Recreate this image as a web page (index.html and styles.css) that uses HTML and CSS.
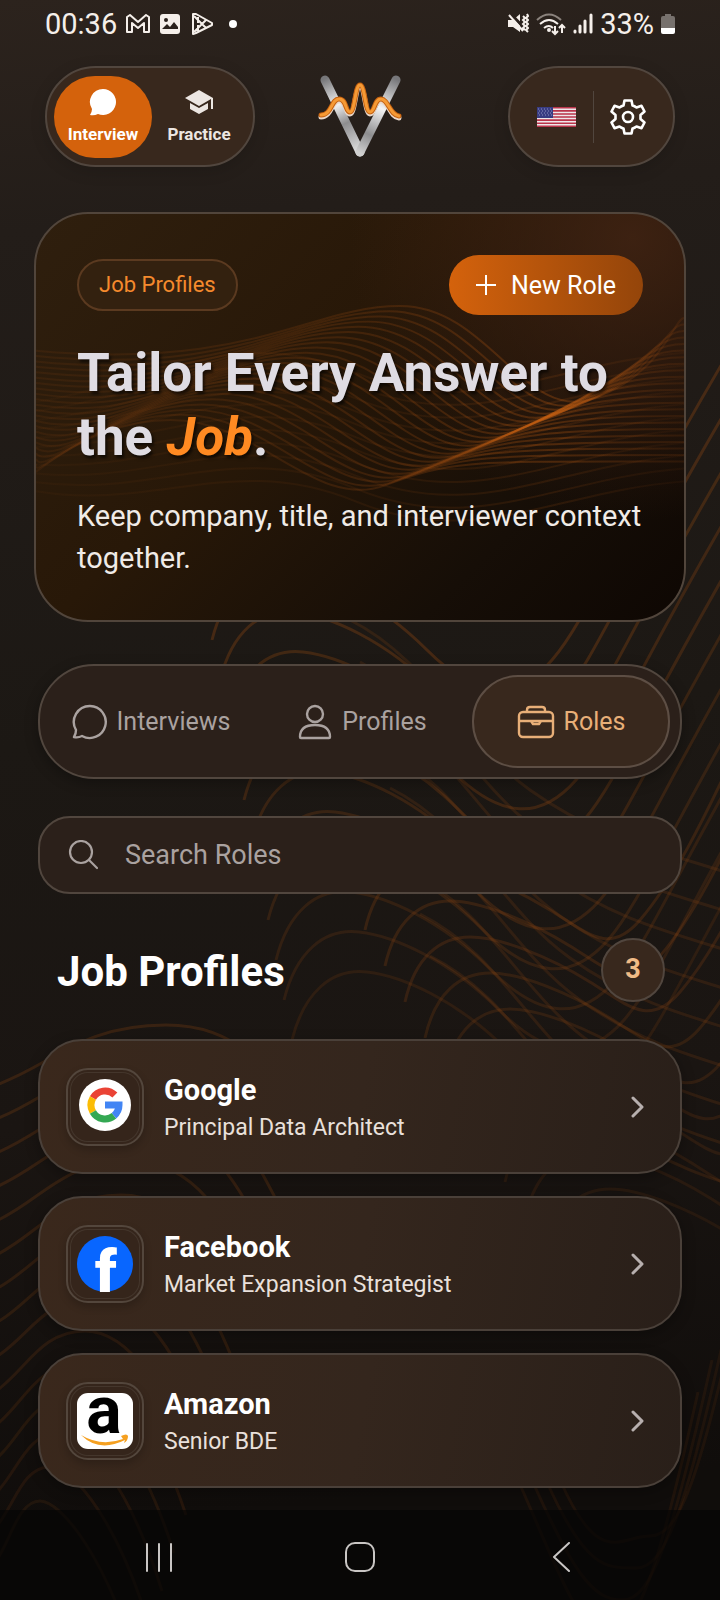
FILE: index.html
```
<!DOCTYPE html>
<html lang="en">
    <head>
        <title>Job Profiles</title>
        <meta charset="UTF-8">
        <meta name="viewport" content="width=device-width, initial-scale=1">
        <link rel="stylesheet" href="styles.css">
    </head>
    <body>
        <svg class="backdrop" viewBox="0 0 720 1600" preserveAspectRatio="none" aria-hidden="true">
            <g id="backwaves"></g>
        </svg>

        <div class="page">
            <div class="status">
                <div class="status-side">
                    <span class="time">00:36</span>
                    <svg width="24" height="20" viewBox="0 0 24 20" fill="none" stroke="#f5efea" stroke-width="2" stroke-linejoin="round"><path d="M1 18V3l3-2 8 7 8-7 3 2v15h-5V9l-6 5-6-5v9z"/></svg>
                    <svg width="22" height="22" viewBox="0 0 22 22"><rect x="1" y="1" width="20" height="20" rx="3" fill="#f5efea"/><path d="M3 16l5-5 3 3 4-5 4 5v2z" fill="#2a211c"/><circle cx="7" cy="7" r="2" fill="#2a211c"/></svg>
                    <svg width="24" height="24" viewBox="0 0 24 24" fill="none" stroke="#f5efea" stroke-width="2" stroke-linejoin="round"><path d="M3 2v20l3-1 16-8v-2L6 2zM4 4l12 12M4 20L16 8M8 5v6M8 19v-6"/></svg>
                    <span class="dot"></span>
                </div>
                <div class="status-side right">
                    <svg width="22" height="22" viewBox="0 0 22 22"><path d="M1 7h5l7-6v18l-7-5H1z" fill="#f5efea"/><path d="M3 0l17 18" stroke="#2a211c" stroke-width="3"/><path d="M2 2l14 16M16 3l2 2-2 2 2 2-2 2 2 2-2 2 2 2M20 1l1 2-2 2 2 2-2 2 2 2-2 2 2 2-2 2 2 2" fill="none" stroke="#f5efea" stroke-width="2"/></svg>
                    <svg width="30" height="24" viewBox="0 0 30 24" fill="none" stroke="#f5efea" stroke-width="2"><path d="M1 8q12-11 24 0" stroke="#8b837d"/><path d="M4 12q9-8 18 0M8 16q5-4 9 0"/><circle cx="13" cy="18" r="1" fill="#f5efea"/><path d="M19 14v8M16 19l3 3 3-3M26 21v-7M23 16l3-3 3 3"/></svg>
                    <svg width="20" height="22" viewBox="0 0 20 22" stroke="#f5efea" stroke-width="3" stroke-linecap="round"><path d="M2 18v1M7 13v6M12 8v11M18 2v17"/></svg>
                    <span class="time">33%</span>
                    <svg class="battery" width="14" height="20" viewBox="0 0 14 20"><path d="M4 0h6v2h2q2 0 2 2v10H0V4q0-2 2-2h2z" fill="#77716d"/><path d="M0 14h14v4q0 2-2 2H2q-2 0-2-2z" fill="#fff"/></svg>
                </div>
            </div>

            <header class="header">
                <div class="pill modes">
                    <button class="mode active">
                        <svg width="28" height="28" viewBox="0 0 28 28"><path d="M14 1a13 13 0 1 1-5 25q-4 2-8 1 2-3 2-6A13 13 0 0 1 14 1z" fill="#fff"/></svg>
                        Interview
                    </button>
                    <button class="mode">
                        <svg width="28" height="28" viewBox="0 0 28 28"><path d="M14 2L0 10l14 8 12-7v10h2V10zM5 15v6l9 5 9-5v-6l-9 5z" fill="#ece6e2"/></svg>
                        Practice
                    </button>
                </div>
                <svg width="84" height="84" viewBox="0 0 84 84" fill="none" stroke-linecap="round" stroke-linejoin="round">
                    <defs>
                        <linearGradient id="steelLeft" gradientUnits="userSpaceOnUse" x1="6" y1="4" x2="42" y2="78"><stop offset="0" stop-color="#77777a"/><stop offset=".35" stop-color="#f2f2f2"/><stop offset=".6" stop-color="#8d8d8f"/><stop offset="1" stop-color="#e4e4e4"/></linearGradient>
                        <linearGradient id="steelRight" gradientUnits="userSpaceOnUse" x1="78" y1="4" x2="42" y2="78"><stop offset="0" stop-color="#77777a"/><stop offset=".4" stop-color="#f4f4f4"/><stop offset=".75" stop-color="#8d8d8f"/><stop offset="1" stop-color="#d0d0d0"/></linearGradient>
                    </defs>
                    <path d="M7 5l35 72" stroke="url(#steelLeft)" stroke-width="9"/>
                    <path d="M78 5L42 77" stroke="url(#steelRight)" stroke-width="9"/>
                    <path d="M3 42c11 0 10-16 18-16s6 13 11 13 5-27 10-27 5 27 10 27 4-13 11-13 9 16 18 17" stroke="#e9d8ca" stroke-width="5"/>
                    <path d="M3 40c11 0 10-16 18-16s6 13 11 13 5-27 10-27 5 27 10 27 4-13 11-13 9 16 18 17" stroke="#c4600f" stroke-width="5"/>
                    <path d="M3 40c11 0 10-16 18-16s6 13 11 13 5-27 10-27 5 27 10 27 4-13 11-13 9 16 18 17" stroke="#f59a35" stroke-width="3"/>
                </svg>
                <div class="pill settings">
                    <button aria-label="Language">
                        <svg width="39" height="20" viewBox="0 0 39 20"><path fill="#eee7ea" d="M0 0h39v20H0z"/><path stroke="#b9344a" stroke-width="1.6" d="M0 .8h39M0 3.9h39M0 7h39M0 10h39M0 13.1h39M0 16.2h39M0 19.2h39"/><path fill="#383c82" d="M0 0h16v11H0z"/><path stroke="#8b8fc0" stroke-dasharray="1 2" d="M1 2h14M2 4h13M1 6h14M2 8h13"/></svg>
                    </button>
                    <span class="divider"></span>
                    <button aria-label="Settings">
                        <svg width="36" height="36" viewBox="0 0 36 36" fill="none" stroke="#fff" stroke-width="2.6" stroke-linejoin="round"><path d="M14.500 1.500h7l1 5q2 .5 4 2l5-1.700 3 5.700-4 3.500v4l4 3.500-3 5.700-5-1.700q-2 1.500-4 2l-1 5h-7l-1-5q-2-.5-4-2l-5 1.700-3-5.700 4-3.500v-4l-4-3.500 3-5.700 5 1.700q2-1.500 4-2z"/><circle cx="18" cy="18" r="5"/></svg>
                    </button>
                </div>
            </header>

            <section class="hero">
                <svg class="hero-waves" viewBox="0 0 650 410" preserveAspectRatio="none" aria-hidden="true">
                    <defs>
                        <linearGradient id="glow" gradientUnits="userSpaceOnUse" x1="0" y1="0" x2="650" y2="0"><stop offset="0" stop-color="#8f4410" stop-opacity=".18"/><stop offset=".55" stop-color="#a04c10" stop-opacity=".32"/><stop offset=".8" stop-color="#d06412" stop-opacity=".36"/><stop offset="1" stop-color="#8f4410" stop-opacity=".22"/></linearGradient>
                    </defs>
                    <g id="herowaves"></g>
                </svg>
                <div class="hero-top">
                    <span class="badge">Job Profiles</span>
                    <button class="new-role">
                        <svg width="20" height="20" viewBox="0 0 20 20" stroke="#fff" stroke-width="2"><path d="M10 0v20M0 10h20"/></svg>
                        New Role
                    </button>
                </div>
                <h1>Tailor Every Answer to the <em>Job</em>.</h1>
                <p>Keep company, title, and interviewer context together.</p>
            </section>

            <nav class="tabs">
                <button class="tab">
                    <svg width="36" height="36" viewBox="0 0 36 36" fill="none" stroke="currentColor" stroke-width="2.400" stroke-linejoin="round"><path d="M18 2a16 16 0 1 1-8 30q-4 2-8 1 2-3 2-7A16 16 0 0 1 18 2z"/></svg>
                    Interviews
                </button>
                <button class="tab">
                    <svg width="36" height="36" viewBox="0 0 36 36" fill="none" stroke="currentColor" stroke-width="2.400" stroke-linejoin="round"><circle cx="18" cy="10" r="8"/><path d="M3 33q0-12 15-12t15 12q0 1-1 1H4q-1 0-1-1z"/></svg>
                    Profiles
                </button>
                <button class="tab active">
                    <svg width="38" height="36" viewBox="0 0 38 36" fill="none" stroke="currentColor" stroke-width="2.400" stroke-linejoin="round"><rect x="2" y="8" width="34" height="25" rx="4"/><path d="M10 8V6q0-3 3-3h12q3 0 3 3v2M2 17h34M14 17l2 3h6l2-3"/></svg>
                    Roles
                </button>
            </nav>

            <div class="search">
                <label for="search" aria-label="Search Roles">
                    <svg width="30" height="30" viewBox="0 0 30 30" fill="none" stroke="#aaa2a0" stroke-width="2.200" stroke-linecap="round"><circle cx="13" cy="12" r="11"/><path d="M21 20l8 8"/></svg>
                </label>
                <input id="search" type="text" placeholder="Search Roles">
            </div>

            <div class="section-head">
                <h2>Job Profiles</h2>
                <span class="count">3</span>
            </div>

            <div class="cards">
                <a class="card" href="#google">
                    <span class="tile">
                        <svg width="56" height="56" viewBox="0 0 56 56" fill="none" stroke-width="7">
                            <circle cx="28" cy="26" r="26" fill="#fff"/>
                            <path d="M37.900 16.100A14 14 0 0 0 15.900 19" stroke="#ea4335"/>
                            <path d="M15.900 19a14 14 0 0 0 0 14" stroke="#fbbc05"/>
                            <path d="M15.900 33A14 14 0 0 0 37 36.700" stroke="#34a853"/>
                            <path d="M37 36.700A14 14 0 0 0 42 26H28" stroke="#4285f4"/>
                        </svg>
                    </span>
                    <span class="info"><strong>Google</strong><span>Principal Data Architect</span></span>
                    <svg class="chevron" width="14" height="22" viewBox="0 0 14 22"><path d="M2 2l9 9-9 9"/></svg>
                </a>
                <a class="card" href="#facebook">
                    <span class="tile">
                        <svg width="56" height="56" viewBox="0 0 56 56"><circle cx="28" cy="28" r="28" fill="#0866ff"/><text class="letter heavy" x="29" y="56" font-size="60" fill="#fff">f</text></svg>
                    </span>
                    <span class="info"><strong>Facebook</strong><span>Market Expansion Strategist</span></span>
                    <svg class="chevron" width="14" height="22" viewBox="0 0 14 22"><path d="M2 2l9 9-9 9"/></svg>
                </a>
                <a class="card" href="#amazon">
                    <span class="tile">
                        <svg width="56" height="56" viewBox="0 0 56 56"><rect width="56" height="56" rx="11" fill="#fff"/><text class="letter" x="27" y="40" font-size="66" fill="#000">a</text><path d="M4 42q20 12 42 4l-2-3q6-3 7 0 0 5-4 7l1-3Q22 60 4 42z" fill="#f5a020"/></svg>
                    </span>
                    <span class="info"><strong>Amazon</strong><span>Senior BDE</span></span>
                    <svg class="chevron" width="14" height="22" viewBox="0 0 14 22"><path d="M2 2l9 9-9 9"/></svg>
                </a>
            </div>

            <nav class="system-nav">
                <button aria-label="Recent apps"><svg width="30" height="30" viewBox="0 0 30 30"><path d="M3 2v27M15 2v27M27 2v27"/></svg></button>
                <button aria-label="Home"><svg width="30" height="30" viewBox="0 0 30 30"><rect x="1" y="1" width="28" height="28" rx="9"/></svg></button>
                <button aria-label="Back"><svg width="30" height="30" viewBox="0 0 30 30"><path d="M23 1L8 15l15 14"/></svg></button>
            </nav>
        </div>
        <script src="waves.js"></script>
    </body>
</html>
```
FILE: styles.css
```
*{
    box-sizing: border-box;
}
body{
    margin: 0;
    min-height: 100vh;
    background: linear-gradient(175deg, #2c231d 0%, #231d19 14%, #1c1814 45%, #1a1512 68%, #100d0b 92%);
    color: #fff;
    font-family: Roboto, "Liberation Sans", sans-serif;
}
button{
    border: 0;
    padding: 0;
    background: none;
    color: inherit;
    font: inherit;
}
svg{
    display: block;
    flex: none;
}
.backdrop{
    position: absolute;
    top: 0;
    left: 0;
    width: 100%;
    height: 100%;
    z-index: -1;
    fill: none;
    stroke: #8a4513;
    stroke-width: 3;
}
.page{
    display: flex;
    flex-direction: column;
    min-height: 100vh;
}

/* status bar */
.status{
    display: flex;
    justify-content: space-between;
    align-items: center;
    height: 48px;
    padding: 0 45px;
    color: #f5efea;
}
.status-side{
    display: flex;
    align-items: center;
    gap: 9px;
}
.status-side.right{
    gap: 7px;
}
.time{
    font-size: 29px;
    line-height: 32px;
}
.dot{
    width: 8px;
    height: 8px;
    margin-left: 6px;
    border-radius: 50%;
    background: #fff;
}

/* header */
.header{
    display: grid;
    grid-template-columns: 1fr auto 1fr;
    align-items: center;
    padding: 18px 45px 0;
}
.pill{
    display: flex;
    align-items: center;
    height: 101px;
    border: 2px solid #51463e;
    border-radius: 51px;
    background: #38281d;
    box-shadow: 0 4px 16px rgba(0, 0, 0, 0.15);
}
.modes{
    width: 210px;
    padding: 0 7px;
}
.mode{
    display: flex;
    flex: 1;
    flex-direction: column;
    align-items: center;
    justify-content: center;
    gap: 7px;
    height: 82px;
    border-radius: 41px;
    color: #ece6e2;
    font-size: 17px;
    font-weight: 700;
    line-height: 22px;
}
.mode.active{
    flex: 0 0 98px;
    background: #d4620c;
    color: #fff;
}
.settings{
    justify-self: end;
    justify-content: space-between;
    width: 167px;
    padding: 0 27px;
}
.divider{
    width: 1px;
    height: 52px;
    background: #51463e;
}

/* hero */
.hero{
    position: relative;
    overflow: hidden;
    margin: 45px 34px 0;
    padding: 41px 41px;
    border: 2px solid #51453b;
    border-radius: 54px;
    background: radial-gradient(circle at 92% 6%, rgba(68, 37, 20, 0.8), rgba(60, 30, 15, 0) 40%), linear-gradient(135deg, #2f1f0e 0%, #281808 40%, #160e07 75%, #0e0703 100%);
}
.hero-waves{
    position: absolute;
    top: 0;
    left: 0;
    width: 100%;
    height: 100%;
    fill: none;
    stroke: url(#glow);
    stroke-width: 2;
}
.hero-top{
    position: relative;
    display: flex;
    justify-content: space-between;
    align-items: center;
}
.badge{
    padding: 12px 20px;
    border: 2px solid #5b3a20;
    border-radius: 26px;
    background: #33210f;
    color: #f58a2d;
    font-size: 22px;
    line-height: 24px;
}
.new-role{
    display: flex;
    align-items: center;
    gap: 15px;
    height: 60px;
    padding: 0 27px;
    border-radius: 30px;
    background: linear-gradient(90deg, #d4620c, #94450a);
    font-size: 25px;
}
h1{
    position: relative;
    margin: 26px 0 0;
    color: #dfdce3;
    font-size: 53px;
    font-weight: 700;
    line-height: 64px;
    text-shadow: 2px 3px 3px rgba(0, 0, 0, 0.6);
}
h1 em{
    color: #ff8a22;
}
.hero p{
    position: relative;
    margin: 26px 0 0;
    color: #f0ebe7;
    font-size: 29px;
    line-height: 42px;
}

/* tabs */
.tabs{
    display: flex;
    margin: 42px 38px 0;
    height: 115px;
    padding: 9px 10px;
    border: 2px solid #51463e;
    border-radius: 56px;
    background: #2b201a;
    box-shadow: 0 4px 14px rgba(0, 0, 0, 0.3);
}
.tab{
    display: flex;
    flex: 1;
    align-items: center;
    justify-content: center;
    gap: 9px;
    padding-right: 9px;
    border: 2px solid transparent;
    border-radius: 46px;
    color: #aaa2a0;
    font-size: 25px;
}
.tab.active{
    flex: 0 0 198px;
    padding: 0;
    border-color: #5d4e44;
    background: #38281d;
    color: #e8af78;
}

/* search */
.search{
    display: flex;
    align-items: center;
    gap: 27px;
    height: 78px;
    margin: 37px 38px 0;
    padding: 0 28px;
    border: 2px solid #51463e;
    border-radius: 32px;
    background: #2b201a;
}
.search input{
    flex: 1;
    min-width: 0;
    border: 0;
    padding: 0;
    background: none;
    color: #fff;
    font: inherit;
    font-size: 27px;
    outline: none;
}
.search input::placeholder{
    color: #aaa2a0;
    opacity: 1;
}

.section-head{
    display: flex;
    justify-content: space-between;
    align-items: center;
    margin: 42px 55px 0 57px;
}
h2{
    margin: 0;
    padding-top: 4px;
    font-size: 42px;
    line-height: 64px;
}
.count{
    width: 64px;
    height: 64px;
    border: 2px solid #51463e;
    border-radius: 50%;
    background: #38281d;
    color: #f0bb86;
    font-size: 27px;
    font-weight: 700;
    line-height: 58px;
    text-align: center;
}

/* job cards */
.cards{
    display: flex;
    flex-direction: column;
    gap: 22px;
    margin: 35px 38px 21px;
}
.card{
    display: flex;
    align-items: center;
    height: 135px;
    padding: 0 35px 0 26px;
    border: 2px solid #4a4039;
    border-radius: 44px;
    background: linear-gradient(100deg, #3a281c, #34261d 50%, #291f19);
    color: #fff;
    text-decoration: none;
    box-shadow: 0 4px 14px rgba(0, 0, 0, 0.3);
}
.tile{
    display: flex;
    flex: none;
    align-items: center;
    justify-content: center;
    width: 78px;
    height: 78px;
    border: 2px solid #53463c;
    border-radius: 22px;
    background: #35251b;
    box-shadow: inset 0 0 0 2px #35251b, inset 0 0 0 3px #44362c, 0 4px 8px rgba(0, 0, 0, 0.2);
}
.tile svg{
    overflow: visible;
}
.letter{
    font-family: Roboto, "Liberation Sans", sans-serif;
    font-weight: 700;
    text-anchor: middle;
}
.letter.heavy{
    font-weight: 900;
}
.info{
    display: flex;
    flex: 1;
    flex-direction: column;
    gap: 6px;
    margin-left: 20px;
    padding-top: 4px;
    color: #e9e0db;
    font-size: 23px;
    line-height: 32px;
}
.info strong{
    color: #fff;
    font-size: 29px;
}
.chevron{
    fill: none;
    stroke: #b7afae;
    stroke-width: 3;
    stroke-linecap: round;
    stroke-linejoin: round;
}

/* system navigation */
.system-nav{
    display: flex;
    justify-content: center;
    gap: 171px;
    margin-top: auto;
    padding: 32px 0 28px;
    background: rgba(5, 5, 4, 0.65);
}
.system-nav svg{
    fill: none;
    stroke: #c9c6c4;
    stroke-width: 2;
    stroke-linecap: round;
    stroke-linejoin: round;
}
```
FILE: waves.js
```
function addPath(group, d, opacity) {
    var p = document.createElementNS("http://www.w3.org/2000/svg", "path");
    p.setAttribute("d", d);
    p.setAttribute("opacity", opacity);
    group.appendChild(p);
}

// long curves on the right: hump, dip, then up to the edge
var back = document.getElementById("backwaves");
for (var i = 0; i < 11; i++) {
    var x = 212 + i * 8;
    var y = 640 + i * 40;
    addPath(back, "M" + x + " " + y + "c12-48 40-72 75-68s90 28 140 78 90 50 125 10 70-130 190-330", 0.38 - i * 0.02);
}
// second set, closer to the edge
for (var i = 0; i < 10; i++) {
    var x = 365 + i * 20;
    var y = 930 + i * 36;
    addPath(back, "M" + x + " " + y + "c10-45 35-65 65-65s80 20 120 45 60 45 90 10 60-90 110-200", 0.28 - i * 0.015);
}
// crossing diagonals
for (var i = 0; i < 9; i++) {
    var y = 620 + i * 42;
    addPath(back, "M" + (350 + i * 10) + " " + y + "c80 40 110 120 180 170s130 60 220 90", 0.2);
}
// U shaped ends in the lower right corner
for (var i = 0; i < 4; i++) {
    addPath(back, "M" + (560 - i * 14) + " 1480c40 90 60 " + (56 + i * 32) + " 90 " + (56 + i * 32) + "s50-60 90-240", 0.12);
}
// contours in the lower left corner
for (var i = 0; i < 15; i++) {
    var y = 1085 + i * 34;
    var peak = 170 - i * 9;
    addPath(back, "M-4 " + y + "c" + peak / 3 + "-20 " + peak / 2 + "-60 " + peak + "-60s" + (110 - i * 3) + " 60 " + (140 - i * 3) + " " + (110 + i * 4), 0.28 - i * 0.01);
}

// folded sheet of lines in the hero
var hero = document.getElementById("herowaves");
for (var i = 0; i <= 22; i++) {
    var t = i / 22;
    var px = 365 - 230 * t, py = 93 + 115 * t;
    var tx = 560 - 210 * t, ty = 186 + 88 * t;
    var sy = 138 + 120 * t, ey = 105 + 145 * t;
    addPath(hero, "M0 " + sy + "C" + (px - 150) + " " + (sy + 20) + " " + (px - 90) + " " + py + " " + px + " " + py
        + "S" + (tx - 70) + " " + (ty + 26) + " " + tx + " " + ty
        + "S" + (tx + 80) + " " + ey + " 650 " + ey, 0.75);
}
for (var i = 0; i < 11; i++) {
    var y = 130 + i * 13;
    addPath(hero, "M0 " + (y + 60 - i * 4) + "C120 " + (y + 40) + " 200 " + (y - 20) + " 320 " + (y + 30) + "S520 " + (y + 20) + " 650 " + (y + 10), 0.35);
}
```
